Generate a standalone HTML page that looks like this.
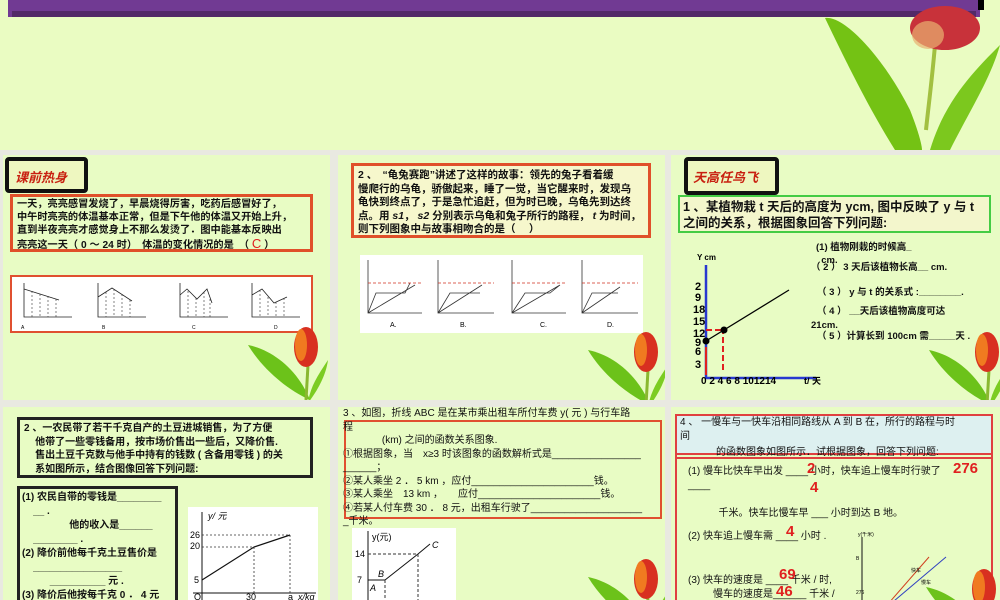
<!DOCTYPE html>
<html><head><meta charset="utf-8"><style>
*{margin:0;padding:0;box-sizing:border-box}
html,body{width:1000px;height:600px;overflow:hidden}
body{background:#e9e9e1;position:relative;font-family:"Liberation Sans","Noto Sans CJK SC",sans-serif;color:#111}
.a{position:absolute}
.p{position:absolute;background:#e8fcc4;overflow:hidden}
.t{font-size:10.5px;line-height:14.5px;font-weight:bold;white-space:nowrap}
.r{color:#e02020;font-weight:bold}
svg text{font-family:"Liberation Sans","Noto Sans CJK SC",sans-serif}
</style></head><body>
<svg width="0" height="0" style="position:absolute"><defs>
<g id="tul">
<path d="M0,20 C25,25 50,45 62,75 C40,65 15,45 0,20Z" fill="#6cc21a"/>
<path d="M58,75 L60,40" stroke="#8ab830" stroke-width="3"/>
<path d="M80,35 C70,50 62,62 60,78 C70,65 78,50 80,35Z" fill="#7ccc22"/>
<ellipse cx="58" cy="22" rx="12" ry="20" fill="#d83020"/>
<ellipse cx="53" cy="20" rx="6" ry="16" fill="#f07a20"/>
</g></defs></svg>

<div class="p" style="left:0;top:0;width:1000px;height:150px;background:#eafcc2">
<div class="a" style="left:8px;top:0;width:972px;height:17px;background:#713a93"></div>
<div class="a" style="left:12px;top:11px;width:964px;height:6px;background:#532968"></div>
<div class="a" style="left:978px;top:0;width:6px;height:10px;background:#000"></div>
<svg class="a" style="left:800px;top:0" width="200" height="150">
<path d="M25,18 C45,15 85,60 110,110 C118,130 122,145 122,150 L95,150 C70,110 50,70 25,18Z" fill="#74c214"/>
<path d="M135,45 C132,80 128,110 126,130" stroke="#a2c040" stroke-width="4" fill="none"/>
<path d="M200,45 C175,70 145,100 130,150 L150,150 C170,110 190,80 200,45Z" fill="#7cc81e"/>
<ellipse cx="145" cy="28" rx="35" ry="22" fill="#c8323a"/>
<ellipse cx="128" cy="35" rx="16" ry="14" fill="#e8b070" opacity=".7"/>
</svg>
</div>

<div class="p" style="left:3px;top:155px;width:327px;height:245px">
<div class="a" style="left:2px;top:2px;width:83px;height:36px;border:4px solid #111;border-radius:4px;background:#eef7c0"></div>
<div class="a" style="left:12px;top:12px;font-size:13px;font-weight:bold;color:#c82010;font-style:italic">课前热身</div>
<div class="a t" style="left:7px;top:39px;width:303px;height:58px;border:3px solid #e0502a;padding:1px 4px;font-size:10.2px;line-height:13px">一天，亮亮感冒发烧了，早晨烧得厉害，吃药后感冒好了，<br>中午时亮亮的体温基本正常，但是下午他的体温又开始上升，<br>直到半夜亮亮才感觉身上不那么发烫了．图中能基本反映出<br>亮亮这一天（ 0 ～ 24 时）　体温的变化情况的是　（ <span class="r" style="font-weight:normal;font-size:13px">C</span> ）</div>
<div class="a" style="left:7px;top:120px;width:303px;height:58px;border:2px solid #e05030;background:#fff"></div>
<svg class="a" style="left:9px;top:122px" width="300" height="55" font-size="5">
<g stroke="#222" fill="none" stroke-width=".8">
<path d="M12,6V40H60M12,12L47,23"/><path d="M86,6V40H134M86,20L100,11L120,24"/><path d="M168,6V40H216M168,18L175,12L185,22L195,12L200,26"/><path d="M240,6V40H288M240,18L250,12L262,26L275,20"/>
</g>
<g stroke="#333" stroke-dasharray="2,2" stroke-width=".6"><path d="M20,14V40M28,17V40M36,19V40M44,22V40M94,15V40M102,12V40M110,17V40M118,23V40M176,14V40M184,21V40M192,15V40M198,22V40M248,13V40M256,20V40M264,25V40M272,21V40"/></g>
<text x="9" y="52">A</text><text x="90" y="52">B</text><text x="180" y="52">C</text><text x="262" y="52">D</text>
</svg>
<svg class="a" style="left:245px;top:170px" width="82" height="75"><use href="#tul"/></svg>
</div>

<div class="p" style="left:338px;top:155px;width:327px;height:245px">
<div class="a t" style="left:13px;top:8px;width:300px;height:75px;border:3px solid #e0502a;background:#f6f7cc;padding:3px 4px;font-size:10.5px;line-height:13.5px">2 、　“龟兔赛跑”讲述了这样的故事：领先的兔子看着缓<br>慢爬行的乌龟，骄傲起来，睡了一觉，当它醒来时，发现乌<br>龟快到终点了，于是急忙追赶，但为时已晚，乌龟先到达终<br>点。用 <i>s1</i>， <i>s2</i> 分别表示乌龟和兔子所行的路程， <i>t</i> 为时间，<br>则下列图象中与故事相吻合的是（　 ）</div>
<div class="a" style="left:22px;top:100px;width:283px;height:78px;background:#fff"></div>
<svg class="a" style="left:22px;top:100px" width="283" height="78" font-size="7">
<g stroke="#333" fill="none" stroke-width=".8">
<path d="M8,5V58H62M8,58L16,38H35V38H45L50,28M8,58L55,30"/><path d="M78,5V58H134M78,58L90,38H120M78,58L122,30"/><path d="M152,5V58H206M152,58L165,38H190L200,30M152,58L200,30"/><path d="M222,5V58H278M222,58L232,38H250L258,38M222,58L260,32"/>
</g>
<g stroke="#d03020" stroke-dasharray="3,2" stroke-width=".8"><path d="M8,28H62M78,28H134M152,28H206M222,28H278"/></g>
<text x="30" y="72">A.</text><text x="100" y="72">B.</text><text x="180" y="72">C.</text><text x="247" y="72">D.</text>
</svg>
<svg class="a" style="left:250px;top:175px" width="77" height="70"><use href="#tul"/></svg>
</div>

<div class="p" style="left:671px;top:155px;width:329px;height:245px">
<div class="a" style="left:13px;top:2px;width:95px;height:38px;border:4px solid #111;border-radius:4px;background:#eef7c0"></div>
<div class="a" style="left:22px;top:12px;font-size:13px;font-weight:bold;color:#c82010;font-style:italic">天高任鸟飞</div>
<div class="a t" style="left:7px;top:40px;width:313px;height:38px;border:2px solid #44cc44;background:#f3f6cc;padding:2px 3px;font-size:12.5px;line-height:16px">1 、某植物栽 t 天后的高度为 ycm, 图中反映了 y 与 t<br>之间的关系，根据图象回答下列问题:</div>
<svg class="a" style="left:0;top:90px" width="160" height="140" font-size="11" font-weight="bold">
<text x="26" y="15" font-size="8">Y cm</text>
<path d="M35,20V133H145" stroke="#2838d0" stroke-width="2.5" fill="none"/>
<path d="M52,125V85M35,85H52" stroke="#e02020" stroke-width="2" stroke-dasharray="6,3"/>
<path d="M35,102V130" stroke="#e02020" stroke-width="2"/>
<path d="M35,96L118,45" stroke="#000" stroke-width="1.3"/>
<circle cx="35" cy="96" r="3.5"/><circle cx="53" cy="85" r="3.5"/>
<text x="24" y="45">2</text><text x="24" y="56">9</text><text x="22" y="68">18</text><text x="22" y="80">15</text><text x="22" y="92">12</text><text x="24" y="101">9</text><text x="24" y="110">6</text><text x="24" y="123">3</text>
<text x="30" y="139" font-size="10">0 2  4  6 8 101214</text><text x="133" y="139" font-size="9">t/ 天</text>
</svg>
<div class="a t" style="left:145px;top:86px;font-size:9.5px;line-height:13px">(1) 植物刚栽的时候高_<br>&nbsp;&nbsp;cm.</div>
<div class="a t" style="left:140px;top:106px;font-size:9.5px">（ 2 ） 3 天后该植物长高__ cm.</div>
<div class="a t" style="left:146px;top:131px;font-size:9.5px">（ 3 ） y 与 t 的关系式 :________.</div>
<div class="a t" style="left:146px;top:150px;font-size:9.5px;line-height:14px">（ 4 ） __天后该植物高度可达<br><span style="margin-left:-6px">21cm.</span></div>
<div class="a t" style="left:146px;top:175px;font-size:9.5px">（ 5 ）计算长到 100cm 需_____天 .</div>
<svg class="a" style="left:258px;top:175px" width="71" height="70"><use href="#tul"/></svg>
</div>

<div class="p" style="left:3px;top:407px;width:327px;height:193px">
<div class="a t" style="left:14px;top:10px;width:296px;height:61px;border:3px solid #222;padding:2px 4px;font-size:10px;line-height:13.5px">2 、一农民带了若干千克自产的土豆进城销售，为了方便<br>&nbsp;&nbsp;&nbsp;&nbsp;他带了一些零钱备用，按市场价售出一些后，又降价售.<br>&nbsp;&nbsp;&nbsp;&nbsp;售出土豆千克数与他手中持有的钱数 ( 含备用零钱 ) 的关<br>&nbsp;&nbsp;&nbsp;&nbsp;系如图所示，结合图像回答下列问题:</div>
<div class="a t" style="left:14px;top:79px;width:161px;height:114px;border:3px solid #222;border-bottom:none;padding:2px 2px;font-size:10px;line-height:14px;overflow:hidden">(1) 农民自带的零钱是________<br>&nbsp;&nbsp;&nbsp;&nbsp;__ .<br>&nbsp;&nbsp;&nbsp;&nbsp;&nbsp;&nbsp;&nbsp;&nbsp;&nbsp;&nbsp;&nbsp;&nbsp;&nbsp;&nbsp;&nbsp;&nbsp;&nbsp;他的收入是______<br>&nbsp;&nbsp;&nbsp;&nbsp;________ .<br>(2) 降价前他每千克土豆售价是<br>&nbsp;&nbsp;&nbsp;&nbsp;________________<br>&nbsp;&nbsp;&nbsp;&nbsp;&nbsp;&nbsp;&nbsp;&nbsp;&nbsp;&nbsp;__________ 元 .<br>(3) 降价后他按每千克 0 ． 4 元</div>
<div class="a" style="left:185px;top:100px;width:130px;height:93px;background:#fff"></div>
<svg class="a" style="left:185px;top:100px" width="130" height="93" font-size="9" font-family="Liberation Serif">
<path d="M14,93V5M5,86H128" stroke="#111" fill="none" stroke-width="1"/>
<path d="M14,73L66,40L102,28" stroke="#111" fill="none" stroke-width="1.2"/>
<path d="M14,28H102V86M14,40H66V86" stroke="#333" stroke-dasharray="2,2" stroke-width=".8" fill="none"/>
<text x="20" y="12" font-style="italic">y/ 元</text><text x="2" y="31">26</text><text x="2" y="42">20</text><text x="6" y="76">5</text><text x="6" y="93">O</text><text x="58" y="93">30</text><text x="100" y="93">a</text><text x="110" y="93" font-style="italic">x/kg</text>
</svg>
</div>

<div class="p" style="left:338px;top:407px;width:327px;height:193px">
<div class="a" style="left:6px;top:13px;width:318px;height:99px;border:2px solid #e05030"></div>
<div class="a t" style="left:5px;top:0px;font-size:10px;line-height:13.5px;font-weight:normal">3 、如图，折线 ABC 是在某市乘出租车所付车费 y( 元 ) 与行车路<br>程<br>&nbsp;&nbsp;&nbsp;&nbsp;&nbsp;&nbsp;&nbsp;&nbsp;&nbsp;&nbsp;&nbsp;&nbsp;&nbsp;&nbsp;(km) 之间的函数关系图象.<br>①根据图象，当　x≥3 时该图象的函数解析式是________________<br>______；<br>②某人乘坐 2 ． 5 km ，应付______________________钱。<br>③某人乘坐　13 km ，　　应付______________________钱。<br>④若某人付车费 30 ． 8 元，出租车行驶了____________________<br>_千米。</div>
<div class="a" style="left:14px;top:121px;width:104px;height:72px;background:#fff"></div>
<svg class="a" style="left:14px;top:121px" width="104" height="72" font-size="9" font-family="Liberation Serif">
<path d="M16,72V3" stroke="#111"/>
<path d="M16,52H33L66,26L78,16" stroke="#111" fill="none"/>
<path d="M16,26H66V72M33,52V72" stroke="#333" stroke-dasharray="3,2" fill="none"/>
<text x="20" y="12">y(元)</text><text x="3" y="29">14</text><text x="5" y="55">7</text><text x="26" y="49" font-style="italic">B</text><text x="18" y="63" font-style="italic">A</text><text x="80" y="20" font-style="italic">C</text>
</svg>
<svg class="a" style="left:250px;top:150px" width="77" height="43"><use href="#tul"/></svg>
</div>

<div class="p" style="left:671px;top:407px;width:329px;height:193px">
<div class="a" style="left:4px;top:7px;width:318px;height:186px;border:2px solid #e04040;border-bottom:none"></div>
<div class="a" style="left:6px;top:9px;width:314px;height:39px;background:#ddf0f0;border-bottom:2px solid #e04040"></div>
<div class="a" style="left:6px;top:50px;width:314px;height:2px;background:#e04040"></div>
<div class="a t" style="left:9px;top:9px;font-size:10px;line-height:14px;font-weight:normal">4 、 一慢车与一快车沿相同路线从 A 到 B 在，所行的路程与时<br>间</div>
<div class="a t" style="left:45px;top:39px;font-size:10px;font-weight:normal">的函数图象如图所示．试根据图象，回答下列问题:</div>
<div class="a t" style="left:17px;top:58px;font-size:10px;line-height:14px;font-weight:normal">(1) 慢车比快车早出发 ____ 小时，快车追上慢车时行驶了<br>____<br><br>&nbsp;&nbsp;&nbsp;&nbsp;&nbsp;&nbsp;&nbsp;&nbsp;&nbsp;&nbsp;&nbsp;千米。快车比慢车早 ___ 小时到达 B 地。</div>
<div class="a r" style="left:136px;top:53px;font-size:15px">2</div>
<div class="a r" style="left:139px;top:72px;font-size:15px">4</div>
<div class="a r" style="left:282px;top:53px;font-size:15px">276</div>
<div class="a t" style="left:17px;top:123px;font-size:10px;font-weight:normal">(2) 快车追上慢车需 ____ 小时 .</div>
<div class="a r" style="left:115px;top:116px;font-size:15px">4</div>
<div class="a t" style="left:17px;top:167px;font-size:10px;font-weight:normal">(3) 快车的速度是 ____ 千米 / 时,</div>
<div class="a r" style="left:108px;top:159px;font-size:15px">69</div>
<div class="a t" style="left:42px;top:182px;font-size:10px;font-weight:normal;line-height:11px">慢车的速度是______ 千米 /</div>
<div class="a r" style="left:105px;top:177px;font-size:15px;line-height:16px">46</div>
<svg class="a" style="left:180px;top:125px" width="110" height="68" font-size="5">
<path d="M11,68V5" stroke="#111"/>
<path d="M30,80L78,25" stroke="#d04020"/><path d="M30,80L95,25" stroke="#3040c0"/>
<text x="7" y="4">y(千米)</text><text x="5" y="28">B</text><text x="5" y="62">276</text><text x="60" y="40">快车</text><text x="70" y="52">慢车</text>
</svg>
<svg class="a" style="left:255px;top:160px" width="74" height="33"><use href="#tul"/></svg>
</div>
</body></html>
